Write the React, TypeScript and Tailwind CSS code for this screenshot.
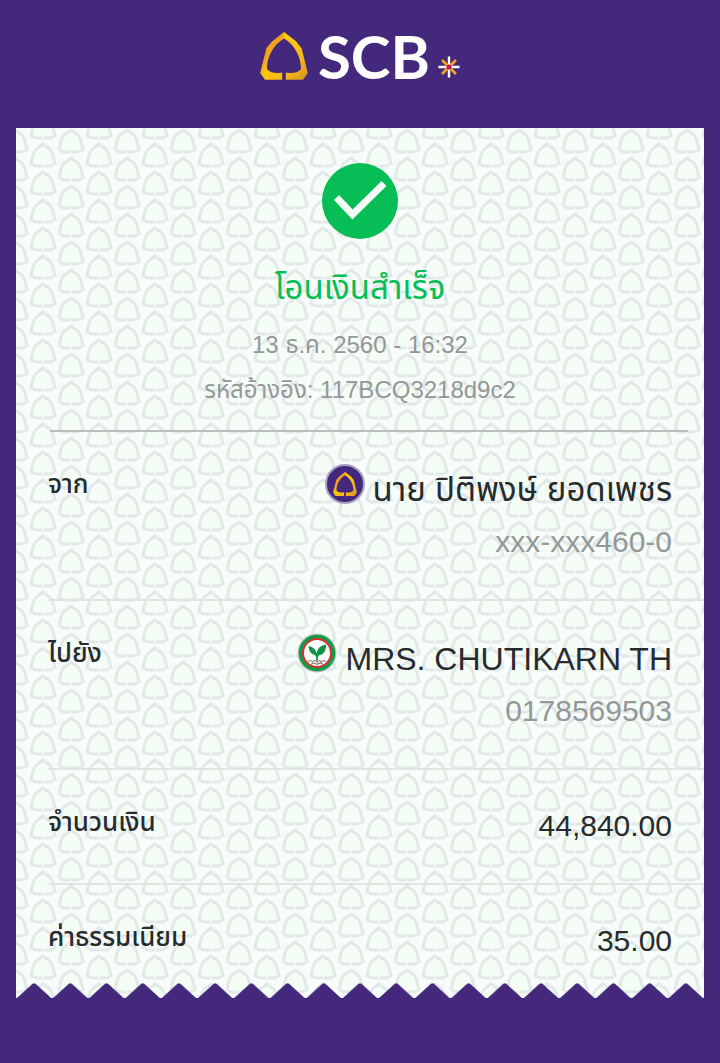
import type { ReactNode } from 'react';

function Leaf({ className, id }: { className: string; id: string }) {
  return (
    <svg viewBox="0 0 48 48" className={className} aria-hidden="true">
      <defs>
        <linearGradient id={id} x1="0" y1="0" x2="1" y2="1">
          <stop offset="0" stopColor="#f39a1f" />
          <stop offset="0.35" stopColor="#f0a51e" />
          <stop offset="0.5" stopColor="#fdc60c" />
          <stop offset="0.75" stopColor="#f4b41a" />
          <stop offset="1" stopColor="#cf8d20" />
        </linearGradient>
      </defs>
      <path
        d="M24 0L36 9.500L41.500 16L47.800 41L43 47.800H25.800V40.500C31 41.500 37 41.500 41 37C41 25 35 13 24 6.500C13 13 7 25 7 37C11 41.500 17 41.500 22.200 40.500V47.800H5L0.200 41L6.500 16L12 9.500Z"
        fill={`url(#${id})`}
      />
      <path d="M24 0L36 9.500L40 16C36 12 30 8.500 24 6.500Z" fill="#fdc90d" />
    </svg>
  );
}

function Spark() {
  return (
    <svg viewBox="-11 -11 22 22" className="mb-[2px] size-[22px]" aria-hidden="true">
      <path d="M0 -10.500V10.500M-10.500 0H10.500" stroke="#fff" strokeWidth="2.4" />
      <path d="M-7 -7L7 7M7 -7L-7 7" stroke="#f5a81c" strokeWidth="2.6" />
      <circle r="2.6" fill="#c2185b" />
    </svg>
  );
}

function Backdrop() {
  return (
    <svg className="absolute inset-0 size-full" aria-hidden="true">
      <defs>
        <path
          id="leaf"
          d="M-2 21.500V23H-7.500L-12 20.500C-10.500 15 -10 10 -7.500 6.500L0 1L7.500 6.500C10 10 10.500 15 12 20.500L7.500 23H2V21.500"
          fill="#f5fef5"
          stroke="#e2e9e9"
          strokeWidth="3"
        />
        <pattern id="leaves" x="-1" y="1" width="56" height="28" patternUnits="userSpaceOnUse">
          <use href="#leaf" x="0" y="0" />
          <use href="#leaf" x="56" y="0" />
          <use href="#leaf" x="28" y="-14" />
          <use href="#leaf" x="28" y="14" />
        </pattern>
      </defs>
      <rect width="100%" height="100%" fill="url(#leaves)" />
    </svg>
  );
}

function KBankBadge() {
  return (
    <svg viewBox="0 0 40 40" className="size-10 shrink-0" aria-hidden="true">
      <circle cx="20" cy="20" r="19.500" fill="#b9c6be" />
      <circle cx="20" cy="20" r="18.300" fill="#159a4c" />
      <circle cx="20" cy="20" r="14" fill="#fff" stroke="#d8322f" strokeWidth="2" />
      <path
        d="M19 27.500C19.500 24 19 22.500 16.500 21.500C13 20 12 17.500 11.500 13C16 14 19 16 19.500 20.500C20.500 15.500 23 12.500 29 11.500C29.500 17 27 21.500 21.700 22.500C20.800 24 20.800 26 21 27.500Z"
        fill="#119447"
      />
      <path
        d="M11 29Q13 26 15.500 29Q17.500 26 20 29Q22.500 26 24.500 29Q27 26 29 29M14 31.500Q17 28.500 20 31.500Q23 28.500 26 31.500"
        fill="none"
        stroke="#8b7d74"
        strokeWidth="1.200"
      />
    </svg>
  );
}

function Teeth() {
  return (
    <svg viewBox="0 0 684 15" preserveAspectRatio="none" className="block h-[15px] w-full" aria-hidden="true">
      <defs>
        <pattern id="teeth" width="36" height="15" patternUnits="userSpaceOnUse">
          <path d="M1 15L16.500 0.800Q18 -0.400 19.500 0.800L35 15Z" fill="#44287c" />
        </pattern>
      </defs>
      <rect width="684" height="15" fill="url(#teeth)" />
    </svg>
  );
}

function Row({ label, className, children }: { label: string; className: string; children: ReactNode }) {
  return (
    <div className={`ml-8 flex items-start justify-between pt-8 pr-8 ${className}`}>
      <dt className="pt-1 text-[26px] leading-8 font-medium">{label}</dt>
      <dd className="text-right">{children}</dd>
    </div>
  );
}

function Party({ icon, name, account }: { icon: ReactNode; name: ReactNode; account: string }) {
  return (
    <>
      <div className="flex items-start justify-end gap-2 leading-[52px]">
        {icon}
        {name}
      </div>
      <div className="text-3xl leading-[52px] text-[#939899]">{account}</div>
    </>
  );
}

export default function App() {
  return (
    <main className="min-h-screen bg-[#44287c] px-4 pb-16 font-['Liberation_Sans','Noto_Sans_Thai','Noto_Sans',sans-serif] text-[#272b2e]">
      <header className="flex h-32 justify-center pt-8">
        <h1 className="flex h-12 items-end text-white">
          <Leaf id="gold" className="size-12" />
          <span className="ml-[10px] font-['Lato','Open_Sans',sans-serif] text-[60px] leading-[48px] font-bold">SCB</span>
          <span className="ml-2">
            <Spark />
          </span>
        </h1>
      </header>

      <section className="relative bg-[#f8fcfa]">
        <Backdrop />
        <div className="relative">
          <div className="flex flex-col items-center pt-[35px] text-center">
            <svg viewBox="0 0 76 76" className="size-[76px]" aria-hidden="true">
              <circle cx="38" cy="38" r="38" fill="#06be55" />
              <path d="M14.500 34.500L30.500 51.500L62 20.500" fill="none" stroke="#f3fcf5" strokeWidth="7" />
            </svg>
            <h2 className="mt-[25px] text-[33px] leading-[48px] text-[#06be55]">โอนเงินสำเร็จ</h2>
            <p className="mt-[10px] text-2xl leading-[45px] text-[#939899]">
              <span className="block">13 ธ.ค. 2560 - 16:32</span>
              <span className="block">รหัสอ้างอิง: 117BCQ3218d9c2</span>
            </p>
          </div>

          <hr className="mt-[18px] mr-4 ml-[34px] border-t-2 border-[#b9bebe]" />

          <dl>
            <Row label="จาก" className="pb-[31px]">
              <Party
                icon={
                  <span className="flex size-10 items-center justify-center rounded-full border-2 border-[#aaa3c4] bg-[#44287c]">
                    <Leaf id="gold-small" className="size-6" />
                  </span>
                }
                name={<span className="text-[33px]">นาย ปิติพงษ์ ยอดเพชร</span>}
                account="xxx-xxx460-0"
              />
            </Row>
            <Row label="ไปยัง" className="border-t-2 border-[#dfe5e4] pb-[31px]">
              <Party
                icon={<KBankBadge />}
                name={<span className="text-[32px]">MRS. CHUTIKARN TH</span>}
                account="0178569503"
              />
            </Row>
            <Row label="จำนวนเงิน" className="border-t-2 border-[#dfe5e4] pb-[33px]">
              <div className="text-3xl leading-[48px]">44,840.00</div>
            </Row>
            <Row label="ค่าธรรมเนียม" className="border-t-2 border-[#dfe5e4] pb-[18px]">
              <div className="text-3xl leading-[48px]">35.00</div>
            </Row>
          </dl>
          <Teeth />
        </div>
      </section>
    </main>
  );
}
